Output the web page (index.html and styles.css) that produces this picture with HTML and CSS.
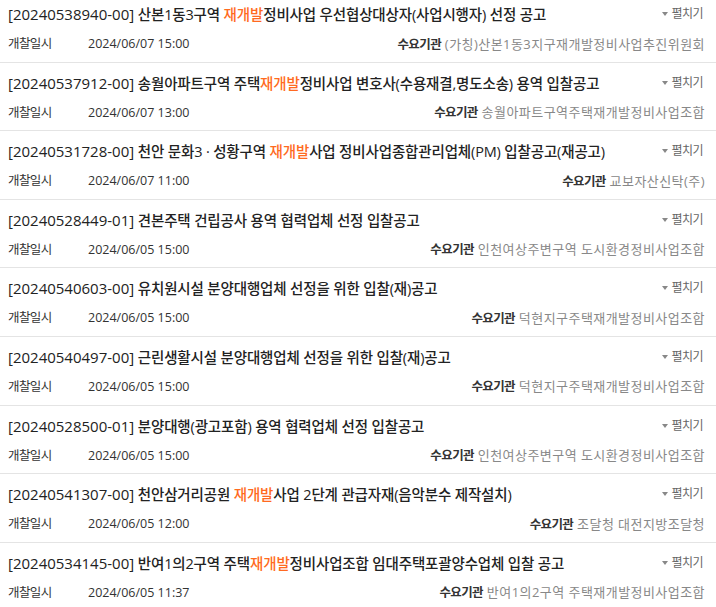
FILE: index.html
```html
<!DOCTYPE html>
<html lang="ko">
<head>
<meta charset="utf-8">
<link rel="stylesheet" href="styles.css">
</head>
<body>
<ul class="bid-list">
  <li class="bid">
    <div class="bid-head">
      <p class="bid-title"><span class="no">[20240538940-00]</span> 산본1동3구역 <em class="hl">재개발</em>정비사업 우선협상대상자(사업시행자) 선정 공고</p>
      <span class="toggle"><span class="tri"></span>펼치기</span>
    </div>
    <div class="bid-meta">
      <span class="lbl">개찰일시</span><span class="date">2024/06/07 15:00</span>
      <span class="org"><b>수요기관</b> (가칭)산본1동3지구재개발정비사업추진위원회</span>
    </div>
  </li>
  <li class="bid">
    <div class="bid-head">
      <p class="bid-title"><span class="no">[20240537912-00]</span> 송월아파트구역 주택<em class="hl">재개발</em>정비사업 변호사(수용재결,명도소송) 용역 입찰공고</p>
      <span class="toggle"><span class="tri"></span>펼치기</span>
    </div>
    <div class="bid-meta">
      <span class="lbl">개찰일시</span><span class="date">2024/06/07 13:00</span>
      <span class="org"><b>수요기관</b> 송월아파트구역주택재개발정비사업조합</span>
    </div>
  </li>
  <li class="bid">
    <div class="bid-head">
      <p class="bid-title"><span class="no">[20240531728-00]</span> 천안 문화3 · 성황구역 <em class="hl">재개발</em>사업 정비사업종합관리업체(PM) 입찰공고(재공고)</p>
      <span class="toggle"><span class="tri"></span>펼치기</span>
    </div>
    <div class="bid-meta">
      <span class="lbl">개찰일시</span><span class="date">2024/06/07 11:00</span>
      <span class="org"><b>수요기관</b> 교보자산신탁(주)</span>
    </div>
  </li>
  <li class="bid">
    <div class="bid-head">
      <p class="bid-title"><span class="no">[20240528449-01]</span> 견본주택 건립공사 용역 협력업체 선정 입찰공고</p>
      <span class="toggle"><span class="tri"></span>펼치기</span>
    </div>
    <div class="bid-meta">
      <span class="lbl">개찰일시</span><span class="date">2024/06/05 15:00</span>
      <span class="org"><b>수요기관</b> 인천여상주변구역 도시환경정비사업조합</span>
    </div>
  </li>
  <li class="bid">
    <div class="bid-head">
      <p class="bid-title"><span class="no">[20240540603-00]</span> 유치원시설 분양대행업체 선정을 위한 입찰(재)공고</p>
      <span class="toggle"><span class="tri"></span>펼치기</span>
    </div>
    <div class="bid-meta">
      <span class="lbl">개찰일시</span><span class="date">2024/06/05 15:00</span>
      <span class="org"><b>수요기관</b> 덕현지구주택재개발정비사업조합</span>
    </div>
  </li>
  <li class="bid">
    <div class="bid-head">
      <p class="bid-title"><span class="no">[20240540497-00]</span> 근린생활시설 분양대행업체 선정을 위한 입찰(재)공고</p>
      <span class="toggle"><span class="tri"></span>펼치기</span>
    </div>
    <div class="bid-meta">
      <span class="lbl">개찰일시</span><span class="date">2024/06/05 15:00</span>
      <span class="org"><b>수요기관</b> 덕현지구주택재개발정비사업조합</span>
    </div>
  </li>
  <li class="bid">
    <div class="bid-head">
      <p class="bid-title"><span class="no">[20240528500-01]</span> 분양대행(광고포함) 용역 협력업체 선정 입찰공고</p>
      <span class="toggle"><span class="tri"></span>펼치기</span>
    </div>
    <div class="bid-meta">
      <span class="lbl">개찰일시</span><span class="date">2024/06/05 15:00</span>
      <span class="org"><b>수요기관</b> 인천여상주변구역 도시환경정비사업조합</span>
    </div>
  </li>
  <li class="bid">
    <div class="bid-head">
      <p class="bid-title"><span class="no">[20240541307-00]</span> 천안삼거리공원 <em class="hl">재개발</em>사업 2단계 관급자재(음악분수 제작설치)</p>
      <span class="toggle"><span class="tri"></span>펼치기</span>
    </div>
    <div class="bid-meta">
      <span class="lbl">개찰일시</span><span class="date">2024/06/05 12:00</span>
      <span class="org"><b>수요기관</b> 조달청 대전지방조달청</span>
    </div>
  </li>
  <li class="bid">
    <div class="bid-head">
      <p class="bid-title"><span class="no">[20240534145-00]</span> 반여1의2구역 주택<em class="hl">재개발</em>정비사업조합 임대주택포괄양수업체 입찰 공고</p>
      <span class="toggle"><span class="tri"></span>펼치기</span>
    </div>
    <div class="bid-meta">
      <span class="lbl">개찰일시</span><span class="date">2024/06/05 11:37</span>
      <span class="org"><b>수요기관</b> 반여1의2구역 주택재개발정비사업조합</span>
    </div>
  </li>
</ul>
</body>
</html>
```

FILE: styles.css
```css
html, body {
  margin: 0;
  padding: 0;
  background: #fff;
}
body {
  font-family: "Open Sans", "Noto Sans CJK KR", sans-serif;
  color: #222;
}
.bid-list {
  list-style: none;
  margin: 0;
  padding: 0;
}
.bid {
  padding: 10px 11px 7.6px 8px;
  border-bottom: 1px solid #e4e4e4;
}
.bid:first-child {
  padding-top: 4px;
}
.bid:last-child {
  border-bottom: none;
}
.bid-head {
  display: flex;
  align-items: flex-start;
  justify-content: space-between;
}
.bid-title {
  margin: 0;
  height: 22px;
  font-size: 14.5px;
  line-height: 22px;
  font-weight: 500;
  letter-spacing: -0.15px;
  color: #222;
  white-space: nowrap;
}
.no {
  font-size: 15px;
  line-height: 1;
  font-weight: 400;
  letter-spacing: 0;
}
.hl {
  font-style: normal;
  color: #ff6a21;
}
.toggle {
  display: flex;
  align-items: center;
  font-size: 12px;
  line-height: 16px;
  color: #666;
  letter-spacing: -0.5px;
  margin-top: 2px;
  margin-right: 2px;
}
.tri {
  width: 0;
  height: 0;
  border-left: 3px solid transparent;
  border-right: 3px solid transparent;
  border-top: 4px solid #888;
  margin-right: 3px;
}
.bid-meta {
  display: flex;
  align-items: center;
  height: 20px;
  margin-top: 8px;
  font-size: 12.5px;
  line-height: 20px;
  color: #333;
}
.lbl {
  width: 80px;
  letter-spacing: -0.6px;
}
.date {
  color: #333;
}
.org {
  margin-left: auto;
  font-size: 13px;
  color: #888;
  letter-spacing: 0.45px;
}
.org b {
  font-size: 12.5px;
  letter-spacing: -0.6px;
  color: #333;
  font-weight: 700;
}
```
